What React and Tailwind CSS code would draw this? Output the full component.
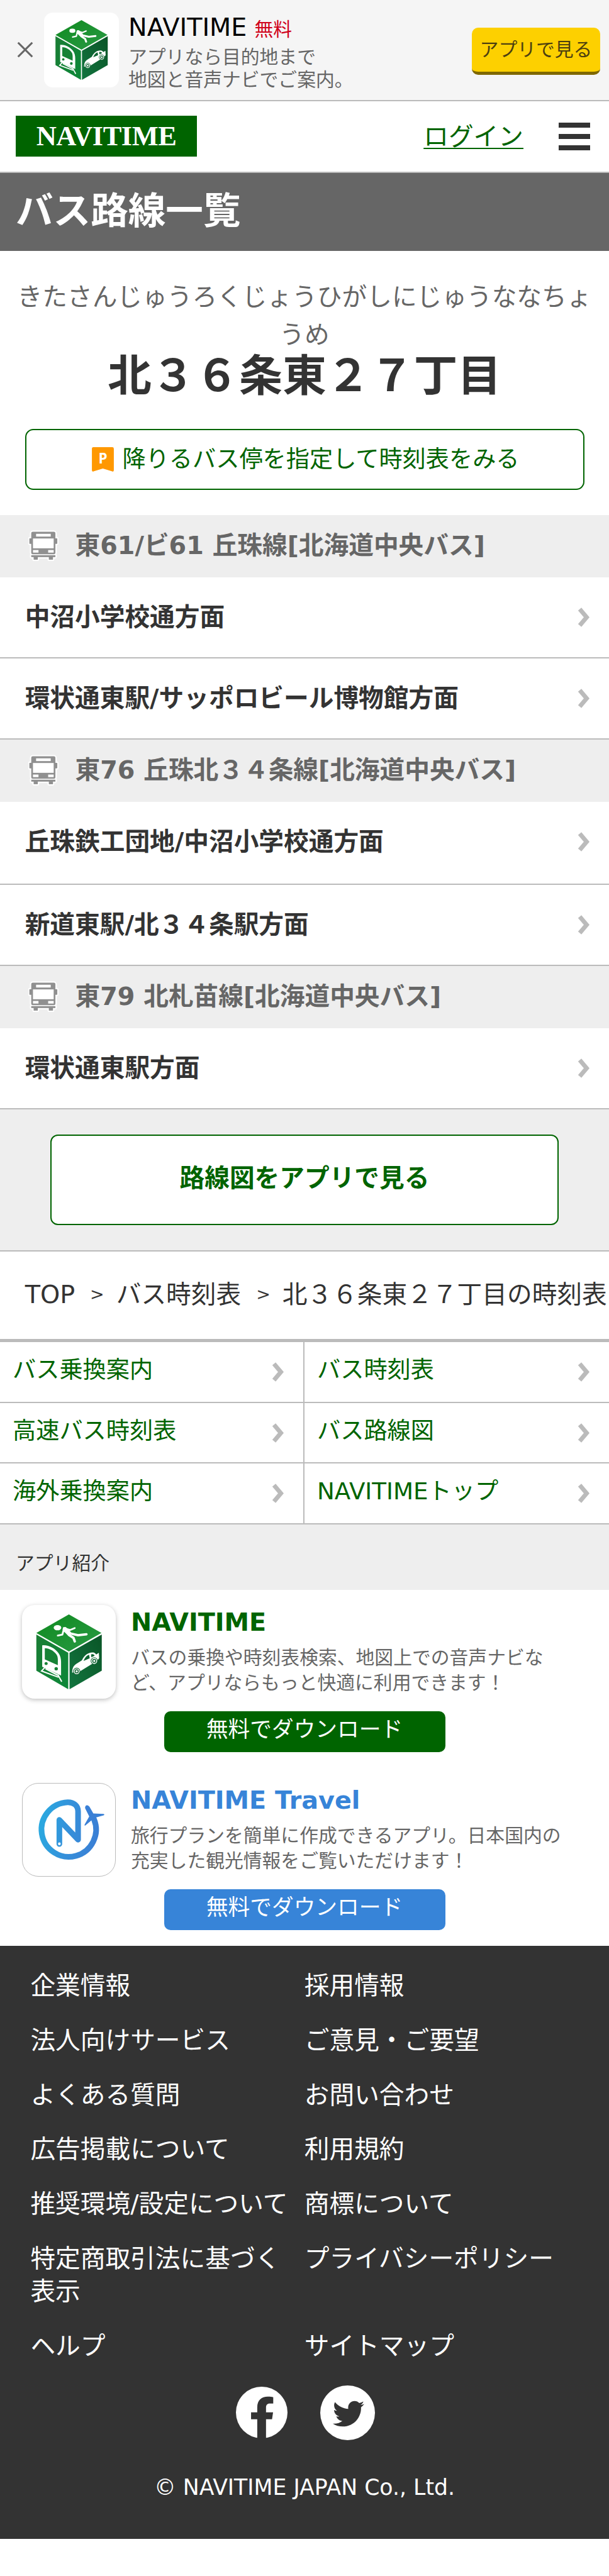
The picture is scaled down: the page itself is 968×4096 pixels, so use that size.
import { FaTwitter } from 'react-icons/fa'

const routes = [
  {
    name: '東61/ビ61 丘珠線[北海道中央バス]',
    directions: [
      { label: '中沼小学校通方面' },
      { label: '環状通東駅/サッポロビール博物館方面' },
    ],
  },
  {
    name: '東76 丘珠北３４条線[北海道中央バス]',
    directions: [
      { label: '丘珠鉄工団地/中沼小学校通方面', tall: true },
      { label: '新道東駅/北３４条駅方面' },
    ],
  },
  {
    name: '東79 北札苗線[北海道中央バス]',
    directions: [{ label: '環状通東駅方面' }],
  },
]

const menuLinks = [
  'バス乗換案内',
  'バス時刻表',
  '高速バス時刻表',
  'バス路線図',
  '海外乗換案内',
  'NAVITIMEトップ',
]

const footerLinks = [
  '企業情報',
  '採用情報',
  '法人向けサービス',
  'ご意見・ご要望',
  'よくある質問',
  'お問い合わせ',
  '広告掲載について',
  '利用規約',
  '推奨環境/設定について',
  '商標について',
  '特定商取引法に基づく表示',
  'プライバシーポリシー',
  'ヘルプ',
  'サイトマップ',
]

function CubeIcon({ className }) {
  return (
    <svg viewBox="0 0 144 144" className={className}>
      <defs>
        <linearGradient id="cubeTop" x1="0" y1="0" x2="1" y2="1">
          <stop offset="0" stopColor="#0f8a1f" />
          <stop offset="1" stopColor="#2a9a45" />
        </linearGradient>
        <linearGradient id="cubeLeft" x1="0" y1="0" x2="1" y2="1">
          <stop offset="0" stopColor="#1b7d35" />
          <stop offset="1" stopColor="#0c8838" />
        </linearGradient>
        <linearGradient id="cubeRight" x1="1" y1="0" x2="0" y2="1">
          <stop offset="0" stopColor="#0a5527" />
          <stop offset="1" stopColor="#12753f" />
        </linearGradient>
      </defs>
      <path d="M72 14.5 L122 43 L72 71.5 L22 43Z" fill="url(#cubeTop)" />
      <path d="M22 45.5 L71 73.5 V129.5 L22 101Z" fill="url(#cubeLeft)" />
      <path d="M122.5 45.5 L73 73.5 V129.5 L122.5 101Z" fill="url(#cubeRight)" />

      {/* walker */}
      <ellipse cx="54.5" cy="35" rx="5.8" ry="4" fill="#fff" />
      <g fill="none" stroke="#fff" strokeLinecap="round" strokeLinejoin="round">
        <path d="M64 35.5 L74 38.5 L81 35.5" strokeWidth="2.6" />
        <path d="M66 37.5 L72 43.5" strokeWidth="7" />
        <path d="M64 38 L62 45.5 L55 47" strokeWidth="2.8" />
        <path d="M73 43.5 L86 46.5 L99 45" strokeWidth="3.6" />
        <path d="M72 46 L79 50.5 L81 56" strokeWidth="3.8" />
      </g>

      {/* train */}
      <path d="M31 62 C41 61 51 67 56 74 C59 78 60 83 60 88 V108.5 L31 95Z" fill="#fff" />
      <path d="M35 66.5 C43 66.5 51 72 54 78 C55.5 82 55 86 55 92.5 L35 83.5Z" fill="#178236" />
      <circle cx="37" cy="90" r="2.4" fill="#178236" />
      <circle cx="52.5" cy="98" r="2.6" fill="#178236" />
      <path d="M35 96 L30 101.5 L56 111 M55 107 L61 118 M36 98 L55 108" fill="none" stroke="#fff" strokeWidth="2" />

      {/* car */}
      <path d="M77 104 C77 96 80 92.5 84 90 L92 85 C96 77 101 73.5 108 73 C112 73 113 75 114 76 L118 73.5 L118.5 82 L115 86 L86 104Z" fill="#fff" />
      <path d="M94.5 86 C97 80 100 77 103 76.5 L104 82Z M106 76 C109 75 111 76 111.5 78 L106.5 80.5Z" fill="#0d6431" />
      <circle cx="84" cy="102" r="5" fill="#fff" stroke="#0d6431" strokeWidth="1" />
      <circle cx="84" cy="102" r="2.4" fill="none" stroke="#0d6431" strokeWidth="1.4" />
      <circle cx="111" cy="86" r="5" fill="#fff" stroke="#0d6431" strokeWidth="1" />
      <circle cx="111" cy="86" r="2.4" fill="none" stroke="#0d6431" strokeWidth="1.4" />
    </svg>
  )
}

function TravelIcon({ className }) {
  return (
    <svg viewBox="0 0 539 539" className={className}>
      <defs>
        <linearGradient id="travel" gradientUnits="userSpaceOnUse" x1="95" y1="240" x2="440" y2="300">
          <stop offset="0" stopColor="#2aa9e0" />
          <stop offset="0.5" stopColor="#3590da" />
          <stop offset="1" stopColor="#3a7fd5" />
        </linearGradient>
      </defs>
      <path
        d="M416 208 A159 159 0 1 1 262 109 C297 108 323 128 323 162 V327 L214 212 V352"
        fill="none"
        stroke="url(#travel)"
        strokeWidth="33"
        strokeLinecap="round"
        strokeLinejoin="round"
      />
      <path
        d="M365 146 C360 126 380 119 390 136 L412 174 L472 177 Q480 181 472 185 L426 198 L430 216 L402 214 L366 244 Q357 247 362 237 L388 192Z"
        fill="#3a80d6"
      />
      <circle cx="214" cy="351" r="8" fill="#fff" />
    </svg>
  )
}

function BusShape() {
  return (
    <>
      <rect x="17" y="8" width="140" height="131" rx="9" />
      <rect x="6" y="46" width="162" height="32" rx="3" />
      <rect x="17" y="143" width="140" height="12" />
      <rect x="31" y="150" width="24" height="20" />
      <rect x="119" y="150" width="24" height="20" />
    </>
  )
}

function BusIcon() {
  return (
    <svg viewBox="0 0 175 180" className="w-[48px] h-[50px] shrink-0">
      <g fill="#fff" stroke="#fff" strokeWidth="15" strokeLinejoin="round">
        <BusShape />
      </g>
      <g fill="#909090">
        <BusShape />
      </g>
      <g fill="#fff">
        <rect x="45" y="20" width="85" height="16" />
        <rect x="27" y="47" width="120" height="57" />
        <rect x="27" y="114" width="32" height="15" />
        <rect x="115" y="114" width="32" height="15" />
        <rect x="17" y="139" width="140" height="4" />
      </g>
    </svg>
  )
}

function Chevron() {
  return (
    <svg viewBox="0 0 24 38" className="w-[20px] h-[31px] shrink-0">
      <path d="M4 3 L17.5 19 L4 35" fill="none" stroke="#bbb" strokeWidth="8.5" />
    </svg>
  )
}

function FacebookIcon() {
  return (
    <svg viewBox="0 0 300 300" className="w-[82px] h-[82px]">
      <circle cx="150" cy="150" r="150" fill="#fff" />
      <path
        d="M124 300 V189 H88 V149 H124 V120 C124 78 150 58 186 58 C200 58 208 59 217 61 V98 H198 C181 98 175 107 175 122 V149 H216 L210 189 H175 V300Z"
        fill="#333"
      />
    </svg>
  )
}

function AppBanner() {
  return (
    <div className="flex h-[161px] bg-[#f5f5f5] border-b-2 border-[#bbb]">
      <svg viewBox="0 0 30 30" className="w-[26px] h-[26px] ml-[27px] mt-[66px]">
        <path d="M2 2 L28 28 M28 2 L2 28" stroke="#666" strokeWidth="3.6" />
      </svg>
      <CubeIcon className="w-[119px] h-[119px] ml-[17px] mt-5 bg-white rounded-[14px]" />
      <div className="ml-[15px] mt-[17px] flex-1">
        <p className="h-[52px] leading-[52px] text-[39.7px] text-black whitespace-nowrap">
          NAVITIME<span className="ml-[12px] text-[29.8px] leading-none text-[#d0021b]">無料</span>
        </p>
        <p className="mt-[4px] text-[29.8px] leading-[35.7px] text-[#666]">
          アプリなら目的地まで
          <br />
          地図と音声ナビでご案内。
        </p>
      </div>
      <button className="w-[204px] h-[75px] mt-[44px] mr-[14px] rounded-[10px] bg-[#fdd000] border-b-[5px] border-[#7f6800] text-[29.8px] leading-[70px] text-[#4c3f10] whitespace-nowrap">
        アプリで見る
      </button>
    </div>
  )
}

function Header() {
  return (
    <header className="flex items-center h-[114px] pl-[25px] pr-[30px] bg-white border-b-2 border-[#bbb]">
      <div className="flex items-center justify-center w-[288px] h-[65px] mt-[-1px] bg-[#006400] text-white font-bold font-['Liberation_Serif',serif] text-[44.5px] leading-[65px] tracking-[-0.5px]">
        NAVITIME
      </div>
      <a className="ml-auto text-[39.7px] leading-[60px] text-[#006400] underline decoration-2 underline-offset-[4px]">ログイン</a>
      <div className="flex flex-col gap-[10.5px] ml-[56px] w-[50px]">
        <span className="h-[7.4px] bg-[#333]" />
        <span className="h-[7.4px] bg-[#333]" />
        <span className="h-[7.4px] bg-[#333]" />
      </div>
    </header>
  )
}

function Station() {
  return (
    <section className="h-[420px] px-6 pt-[44px] text-center">
      <p className="text-[39.7px] leading-[59.6px] text-[#666]">きたさんじゅうろくじょうひがしにじゅうななちょうめ</p>
      <h2 className="text-[69.5px] leading-[72px] font-bold text-[#333]">北３６条東２７丁目</h2>
      <button className="flex items-center justify-center w-[889px] h-[97px] mx-auto mt-[48px] pl-[4px] border-2 border-[#006400] rounded-[13px] text-[37.2px] text-[#006400]">
        <svg viewBox="0 0 42 47" className="w-[35px] h-[39px] mr-[13px]">
          <path d="M3 0 H39 Q42 0 42 3 V44 Q42 48 38 46 L21 41 L4 46 Q0 48 0 44 V3 Q0 0 3 0Z" fill="#ff9800" />
          <text x="21" y="31" textAnchor="middle" fontFamily="Open Sans, sans-serif" fontWeight="700" fontSize="27" fill="#fff">
            P
          </text>
        </svg>
        降りるバス停を指定して時刻表をみる
      </button>
    </section>
  )
}

function Route({ name, directions }) {
  return (
    <section>
      <h3 className="flex items-center h-[99px] pl-[45px] pb-px gap-[26.5px] bg-[#eee] text-[39.7px] font-bold text-[#666] whitespace-nowrap">
        <BusIcon />
        {name}
      </h3>
      {directions.map(({ label, tall }) => (
        <a
          key={label}
          className={`flex items-center justify-between pl-[39.7px] pr-[30px] border-b-2 border-[#bbb] text-[39.7px] font-bold text-[#333] ${
            tall ? 'h-[132px] pb-[3px]' : 'h-[129px]'
          }`}
        >
          {label}
          <Chevron />
        </a>
      ))}
    </section>
  )
}

function Breadcrumb() {
  return (
    <nav className="flex items-center h-[144px] pl-[39.7px] pb-[2px] border-b-[5px] border-[#bbb] text-[39.7px] text-[#333] whitespace-nowrap overflow-hidden">
      <span>TOP</span>
      <span className="ml-[24px] mr-[19px] text-[27px]">&gt;</span>
      <span>バス時刻表</span>
      <span className="ml-[24px] mr-[19px] text-[27px]">&gt;</span>
      <span>北３６条東２７丁目の時刻表</span>
    </nav>
  )
}

function MenuGrid() {
  return (
    <div className="grid grid-cols-[484px_484px] bg-white">
      {menuLinks.map((label, i) => (
        <a
          key={label}
          className={`flex justify-between h-[96.7px] pl-[20px] pr-[30px] border-b-2 border-[#bbb] text-[37.2px] leading-[89px] text-[#006400] ${
            i % 2 === 0 ? 'border-r-2' : ''
          }`}
        >
          {label}
          <span className="flex items-center">
            <Chevron />
          </span>
        </a>
      ))}
    </div>
  )
}

function AppCard({ icon, title, lines, titleClass, buttonClass }) {
  return (
    <article className="h-[283px]">
      <div className="flex h-[193px] pt-[24px] pl-[35px]">
        {icon}
        <div className="ml-[24px] mt-[-1px]">
          <h4 className={`text-[39.7px] leading-[56px] font-bold ${titleClass}`}>{title}</h4>
          <p className="mt-[9px] text-[29.8px] leading-[39.7px] text-[#666] whitespace-nowrap">
            {lines[0]}
            <br />
            {lines[1]}
          </p>
        </div>
      </div>
      <button className={`block w-[447px] h-[65px] mx-auto rounded-[10px] text-[34.7px] leading-[59px] pb-[6px] text-white ${buttonClass}`}>
        無料でダウンロード
      </button>
    </article>
  )
}

function Footer() {
  return (
    <footer className="h-[943px] pt-[37px] bg-[#333] text-white">
      <div className="grid grid-cols-[435.4px_435.4px] gap-y-[34.7px] pl-[48.4px] text-[39.7px] leading-[52.1px]">
        {footerLinks.map((label) => (
          <a key={label}>{label}</a>
        ))}
      </div>
      <div className="flex items-center justify-center gap-[52px] mt-[37px] pl-[2px]">
        <FacebookIcon />
        <span className="flex items-center justify-center w-[87px] h-[87px] pl-[3px] pt-[4px] rounded-full bg-white text-[#333]">
          <FaTwitter size={50} />
        </span>
      </div>
      <p className="mt-[45px] text-center text-[34.7px] leading-[60px]">© NAVITIME JAPAN Co., Ltd.</p>
    </footer>
  )
}

export default function App() {
  return (
    <div lang="ja" className="w-[968px] h-[4096px] overflow-hidden bg-white font-['DejaVu_Sans','Noto_Sans_CJK_JP',sans-serif]">
      <AppBanner />
      <Header />
      <h1 className="h-[124px] pl-[25px] bg-[#666] text-[59.6px] leading-[121px] font-bold text-white">バス路線一覧</h1>
      <Station />
      {routes.map((route) => (
        <Route key={route.name} {...route} />
      ))}
      <div className="h-[226px] pt-[40px] bg-[#eee] border-b-2 border-[#bbb]">
        <button className="block w-[808px] h-[144px] mx-auto pb-[5px] bg-white border-2 border-[#006400] rounded-[12px] text-[39.7px] font-bold text-[#006400]">
          路線図をアプリで見る
        </button>
      </div>
      <Breadcrumb />
      <MenuGrid />
      <h3 className="h-[104px] pl-[25px] bg-[#eee] text-[29.8px] leading-[123px] text-[#333]">アプリ紹介</h3>
      <AppCard
        icon={<CubeIcon className="w-[149px] h-[149px] bg-white rounded-[20px] shadow-[0_2px_7px_rgba(0,0,0,0.25)]" />}
        title="NAVITIME"
        titleClass="text-[#006400]"
        buttonClass="bg-[#006400]"
        lines={['バスの乗換や時刻表検索、地図上での音声ナビな', 'ど、アプリならもっと快適に利用できます！']}
      />
      <AppCard
        icon={<TravelIcon className="w-[149px] h-[149px] bg-white border border-[#bbb] rounded-[26px]" />}
        title="NAVITIME Travel"
        titleClass="text-[#3784d8]"
        buttonClass="bg-[#3784d8]"
        lines={['旅行プランを簡単に作成できるアプリ。日本国内の', '充実した観光情報をご覧いただけます！']}
      />
      <Footer />
    </div>
  )
}
